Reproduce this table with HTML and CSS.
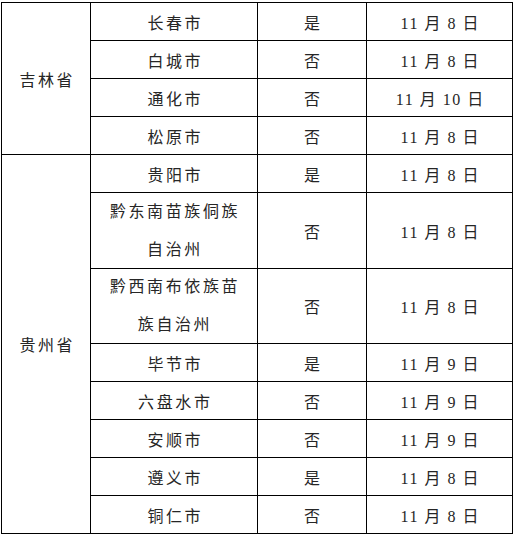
FILE: index.html
```html
<!DOCTYPE html>
<html lang="zh-CN">
<head>
<meta charset="utf-8">
<title>表格</title>
<link rel="stylesheet" href="styles.css">
</head>
<body>
<div class="table">
  <div class="cell prov prov-jl">吉林省</div>
  <div class="cell city">长春市</div><div class="cell yn">是</div><div class="cell date">11 月 8 日</div>
  <div class="cell city">白城市</div><div class="cell yn">否</div><div class="cell date">11 月 8 日</div>
  <div class="cell city">通化市</div><div class="cell yn">否</div><div class="cell date">11 月 10 日</div>
  <div class="cell city">松原市</div><div class="cell yn">否</div><div class="cell date">11 月 8 日</div>

  <div class="cell prov prov-gz">贵州省</div>
  <div class="cell city">贵阳市</div><div class="cell yn">是</div><div class="cell date">11 月 8 日</div>
  <div class="cell city multi">黔东南苗族侗族自治州</div><div class="cell yn">否</div><div class="cell date">11 月 8 日</div>
  <div class="cell city multi">黔西南布依族苗族自治州</div><div class="cell yn">否</div><div class="cell date">11 月 8 日</div>
  <div class="cell city">毕节市</div><div class="cell yn">是</div><div class="cell date">11 月 9 日</div>
  <div class="cell city">六盘水市</div><div class="cell yn">否</div><div class="cell date">11 月 9 日</div>
  <div class="cell city">安顺市</div><div class="cell yn">否</div><div class="cell date">11 月 9 日</div>
  <div class="cell city">遵义市</div><div class="cell yn">是</div><div class="cell date">11 月 8 日</div>
  <div class="cell city">铜仁市</div><div class="cell yn">否</div><div class="cell date">11 月 8 日</div>
</div>
</body>
</html>
```

FILE: styles.css
```css
html, body {
  margin: 0;
  padding: 0;
  background: #fff;
}

body {
  padding: 2px 0 0 1px;
  font-family: "Liberation Serif", "Noto Sans CJK SC", serif;
  font-size: 16px;
  color: #262626;
}

.table {
  display: grid;
  width: 512px;
  box-sizing: border-box;
  grid-template-columns: 88px 166px 108px 145px;
  grid-template-rows: 37px 37px 37px 37px 37px 75px 74px 37px 37px 37px 37px 37px;
  gap: 1px;
  padding: 1px;
  background: #000;
}

.cell {
  background: #fff;
  display: flex;
  align-items: center;
  justify-content: center;
  text-align: center;
  letter-spacing: 2.6px;
  padding-left: 2.6px;
  white-space: nowrap;
}

.prov-jl {
  grid-column: 1;
  grid-row: 1 / span 4;
}

.prov-gz {
  grid-column: 1;
  grid-row: 5 / span 8;
}

.city.multi {
  white-space: normal;
  line-height: 38px;
  padding: 0 12px 0 14px;
}

.date {
  letter-spacing: 1.5px;
  padding-left: 1.5px;
}
```
